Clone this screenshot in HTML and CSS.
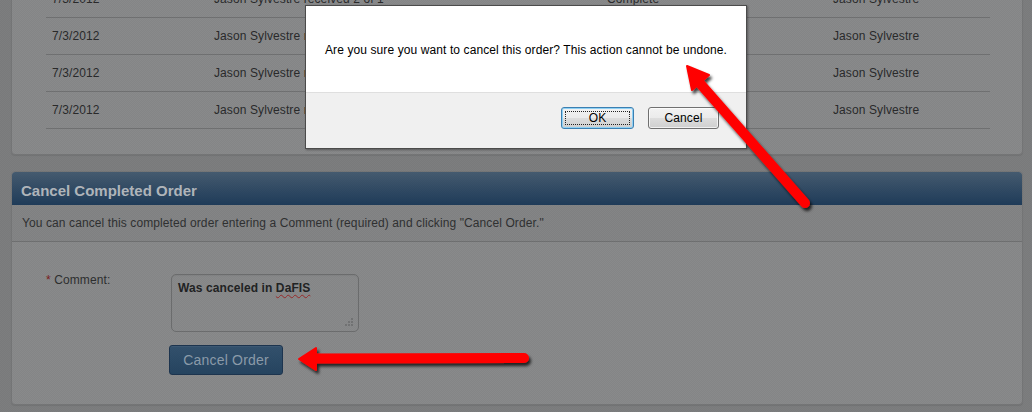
FILE: index.html
```html
<!DOCTYPE html>
<html>
<head>
<meta charset="utf-8">
<link rel="stylesheet" href="styles.css">
</head>
<body>
<div class="page">
  <section class="panel list-panel">
    <div class="table">
      <div class="row"><div class="cell">7/3/2012</div><div class="cell">Jason Sylvestre received 2 of 1</div><div class="cell">Complete</div><div class="cell">Jason Sylvestre</div></div>
      <div class="row"><div class="cell">7/3/2012</div><div class="cell">Jason Sylvestre received 2 of 1</div><div class="cell">Complete</div><div class="cell">Jason Sylvestre</div></div>
      <div class="row"><div class="cell">7/3/2012</div><div class="cell">Jason Sylvestre received 2 of 1</div><div class="cell">Complete</div><div class="cell">Jason Sylvestre</div></div>
      <div class="row"><div class="cell">7/3/2012</div><div class="cell">Jason Sylvestre received 2 of 1</div><div class="cell">Complete</div><div class="cell">Jason Sylvestre</div></div>
    </div>
  </section>

  <section class="panel cancel-panel">
    <h2 class="panel-title">Cancel Completed Order</h2>
    <p class="panel-desc">You can cancel this completed order entering a Comment (required) and clicking "Cancel Order."</p>
    <div class="panel-body">
      <div class="form-row">
        <label class="label"><span class="req">*</span> Comment:</label>
        <div class="field">
          <div class="textarea">Was canceled in <span class="spell">DaFIS</span>
            <svg class="grip" width="8" height="8" viewBox="0 0 8 8"><rect x="6" y="0" width="2" height="2"/><rect x="3" y="3" width="2" height="2"/><rect x="6" y="3" width="2" height="2"/><rect x="0" y="6" width="2" height="2"/><rect x="3" y="6" width="2" height="2"/><rect x="6" y="6" width="2" height="2"/></svg>
          </div>
          <button class="btn-primary">Cancel Order</button>
        </div>
      </div>
    </div>
  </section>
</div>

<div class="dim"></div>

<div class="dialog">
  <div class="dialog-msg">Are you sure you want to cancel this order? This action cannot be undone.</div>
  <div class="dialog-foot">
    <button class="win-btn win-btn-default"><span class="focus">OK</span></button>
    <button class="win-btn">Cancel</button>
  </div>
</div>

<svg class="arrows" width="1032" height="412" viewBox="0 0 1032 412">
  <defs>
    <filter id="sh" x="-20%" y="-20%" width="140%" height="140%">
      <feDropShadow dx="2" dy="3" stdDeviation="1.8" flood-color="#000" flood-opacity="0.75"/>
    </filter>
  </defs>
  <g filter="url(#sh)" fill="#ff0000" stroke="#ff0000">
    <line x1="805" y1="203" x2="697" y2="80" stroke-width="10" stroke-linecap="round"/>
    <polygon points="687,66 709,75 692,90" stroke-width="2" stroke-linejoin="round"/>
    <line x1="524" y1="358" x2="312" y2="358.5" stroke-width="10" stroke-linecap="round"/>
    <polygon points="299,359 316,348 316,370" stroke-width="2" stroke-linejoin="round"/>
  </g>
</svg>
</body>
</html>
```

FILE: styles.css
```css
* { box-sizing: border-box; }

html, body {
  margin: 0;
  padding: 0;
}

body {
  width: 1032px;
  height: 412px;
  overflow: hidden;
  position: relative;
  background: #7d7e7f;
  font-family: "Liberation Sans", Arial, sans-serif;
  font-size: 12px;
  letter-spacing: 0.1px;
  color: #2b2b2c;
}

.page {
  padding: 0 9px 0 11px;
}

.panel {
  background: #898a8b;
  border: 1px solid #767778;
  border-radius: 4px;
  box-shadow: 0 1px 1px rgba(0,0,0,0.08);
}

.list-panel {
  margin-top: -20px;
  padding: 0 32px 25px 34px;
}

.table {
  display: flex;
  flex-direction: column;
}

.row {
  display: grid;
  grid-template-columns: 162px 393px 226px 163px;
  height: 37px;
  border-bottom: 1px solid #717273;
  align-items: center;
}

.cell {
  padding-left: 6px;
  white-space: nowrap;
  overflow: hidden;
  color: #2a2a2b;
}

.cancel-panel {
  margin-top: 16px;
  overflow: hidden;
}

.panel-title {
  margin: 0;
  height: 33px;
  padding: 3px 0 0 9px;
  display: flex;
  align-items: center;
  font-size: 15px;
  font-weight: bold;
  letter-spacing: 0;
  color: #b2b7bd;
  background: linear-gradient(#465c71, #1f3c5a);
  border-radius: 3px 3px 0 0;
}

.panel-desc {
  margin: 0;
  height: 37px;
  padding: 0 0 1px 10px;
  display: flex;
  align-items: center;
  background: #848586;
  border-bottom: 1px solid #707172;
  color: #303132;
}

.panel-body {
  padding: 29px 0 29px 34px;
}

.form-row {
  display: flex;
  align-items: flex-start;
}

.label {
  width: 125px;
  line-height: 14px;
  padding-top: 2px;
  color: #2e2f30;
}

.req {
  color: #7b1d1d;
}

.field {
  display: flex;
  flex-direction: column;
  align-items: flex-start;
  padding-top: 3px;
}

.textarea {
  position: relative;
  width: 188px;
  height: 58px;
  border: 1px solid #6d6e6f;
  border-radius: 5px;
  padding: 6px 6px;
  font-weight: bold;
  line-height: 14px;
  color: #222324;
  box-shadow: inset 0 1px 1px rgba(0,0,0,0.05);
}

.spell {
  text-decoration: underline wavy #9a2a2a;
  text-decoration-thickness: 1px;
  text-underline-offset: 2px;
}

.grip {
  position: absolute;
  right: 5px;
  bottom: 5px;
  fill: #737475;
}

.btn-primary {
  margin: 13px 0 0 -2px;
  width: 114px;
  height: 30px;
  border: 1px solid #1d3550;
  border-radius: 3px;
  background: linear-gradient(#34526e, #264561);
  color: #8d9dac;
  font-family: "Liberation Sans", Arial, sans-serif;
  font-size: 14px;
  letter-spacing: 0.2px;
  padding: 0;
  box-shadow: inset 0 1px 0 rgba(255,255,255,0.05);
}

.dim {
  position: absolute;
  inset: 0;
  background-image: repeating-conic-gradient(rgba(0,0,0,0.035) 0 25%, transparent 0 50%);
  background-size: 2px 2px;
  pointer-events: none;
}

.dialog {
  position: absolute;
  left: 305px;
  top: 5px;
  width: 442px;
  height: 144px;
  border: 1px solid #4b4b4b;
  background: #f0f0f0;
  box-shadow: 1px 1px 2px rgba(0,0,0,0.35);
  display: flex;
  flex-direction: column;
  color: #000;
}

.dialog-msg {
  height: 87px;
  background: #fff;
  display: flex;
  align-items: center;
  padding-left: 19px;
  padding-top: 1px;
  border-bottom: 1px solid #dfdfdf;
  font-size: 12px;
}

.dialog-foot {
  display: flex;
  justify-content: flex-end;
  gap: 14px;
  padding: 14px 27px 0 0;
}

.win-btn {
  width: 71px;
  height: 22px;
  border: 1px solid #707070;
  border-radius: 3px;
  background: linear-gradient(#f2f2f2 0%, #ebebeb 48%, #dddddd 52%, #cfcfcf 100%);
  font-family: "Liberation Sans", Arial, sans-serif;
  font-size: 12px;
  letter-spacing: 0.1px;
  color: #000;
  padding: 0;
  display: flex;
  align-items: center;
  justify-content: center;
  box-shadow: inset 0 0 0 1px rgba(255,255,255,0.7);
}

.win-btn-default {
  width: 73px;
  border-color: #3c7fb1;
  box-shadow: inset 0 0 0 1px #8fd1f5;
  position: relative;
}

.focus {
  position: absolute;
  inset: 3px;
  border: 1px dotted #222;
  display: flex;
  align-items: center;
  justify-content: center;
}

.arrows {
  position: absolute;
  left: 0;
  top: 0;
  pointer-events: none;
}
```
